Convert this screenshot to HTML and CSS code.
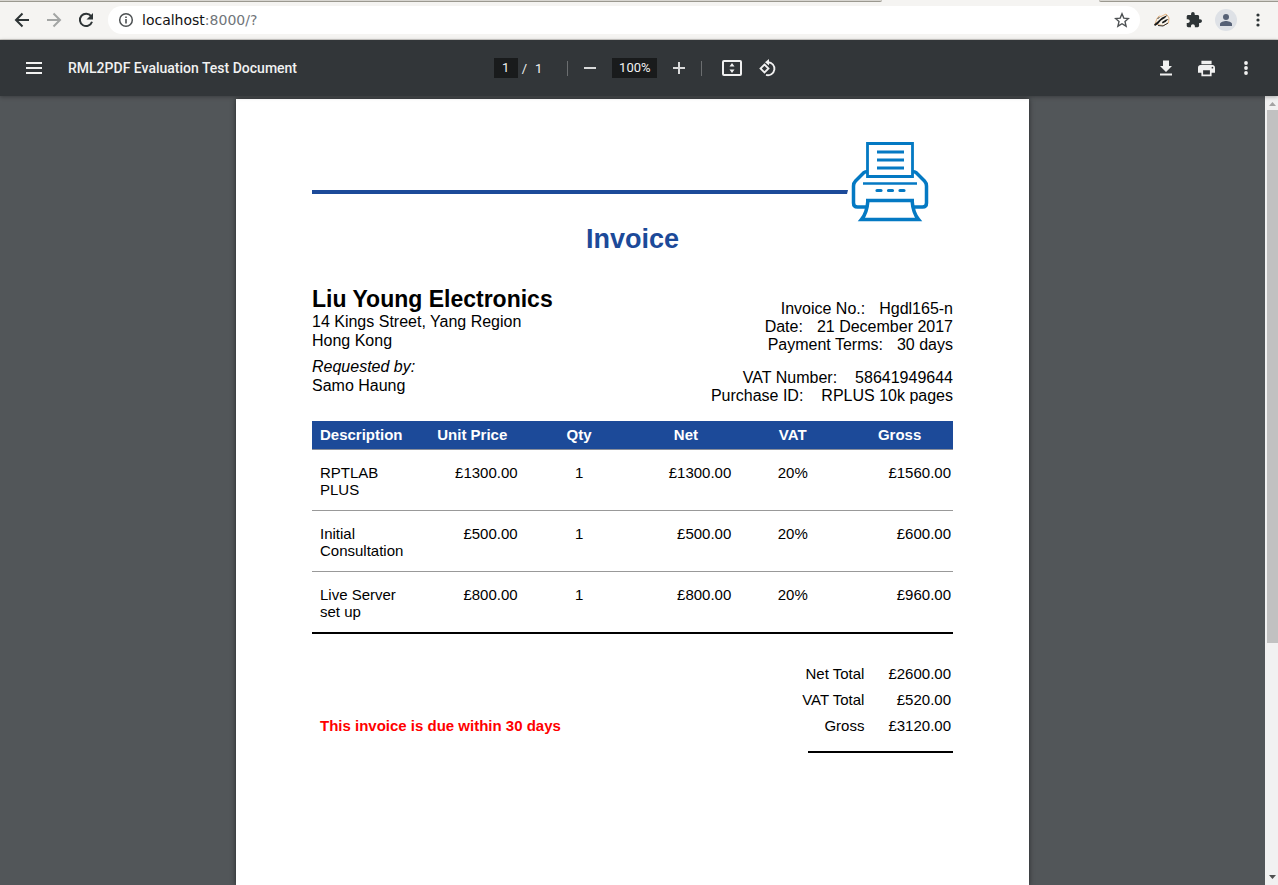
FILE: index.html
```html
<!DOCTYPE html>
<html lang="en">
<head>
<meta charset="utf-8">
<title>RML2PDF Evaluation Test Document</title>
<link rel="stylesheet" href="styles.css">
</head>
<body>
<div class="browser">
  <div class="tab-strip"><span class="tab-edge tab-edge-left"></span><span class="tab-edge tab-edge-right"></span></div>
  <nav class="browser-bar" aria-label="Browser">
    <button class="nav-button" aria-label="Back"><svg width="16" height="16" viewBox="0 0 16 16" fill="none" stroke="#2e3436" stroke-width="2"><path d="M15 8H2.500M8.500 1.500 2 8l6.500 6.500"/></svg></button>
    <button class="nav-button" aria-label="Forward"><svg width="16" height="16" viewBox="0 0 16 16" fill="none" stroke="#a3a5a4" stroke-width="2"><path d="M1 8h12.500M7.500 1.500 14 8l-6.500 6.500"/></svg></button>
    <button class="nav-button" aria-label="Reload"><svg width="16" height="16" viewBox="0 0 16 16"><path d="M13.100 4.200A6.200 6.200 0 1 0 14 9.800" fill="none" stroke="#2e3436" stroke-width="2"/><path d="M15 1v6.500H8.500z" fill="#2e3436"/></svg></button>
    <div class="address">
      <svg width="16" height="16" viewBox="0 0 16 16"><circle cx="8" cy="8" r="6.300" fill="none" stroke="#4d5153" stroke-width="1.500"/><path d="M7.200 7h1.600v4.500H7.200zM7.200 4.500h1.600v1.600H7.200z" fill="#4d5153"/></svg>
      <a class="url" href="#">localhost<span class="url-rest">:8000/?</span></a>
      <button class="star" aria-label="Bookmark"><svg width="16" height="16" viewBox="0 0 16 16"><path d="m8 1.800 1.800 4.300 4.700.4L11 9.600l1.100 4.600L8 11.700l-4.100 2.500L5 9.600 1.500 6.500l4.700-.4z" fill="none" stroke="#4d5153" stroke-width="1.400"/></svg></button>
    </div>
    <div class="extensions">
      <button class="ext-button" aria-label="Badger extension"><svg width="18" height="16" viewBox="0 0 18 16"><path d="M2 12 4 6.500 6 4l2 .5L13 2l1.500 1.500L16 6l-.5 5-5 2.500-6-1z" fill="#f8f5ee" stroke="#e0a265" stroke-width=".8"/><path d="M1 12.500 4 10l5-4.500L14.500 3 12 6 8 8.500 5 12l-3 2zM9 10l4-2.500L15.500 7l-3 3-3 1.500z" fill="#1a1a1a"/><path d="M4.500 7 6.500 5M5 13.500l5 .5 5-3" fill="none" stroke="#333" stroke-width="1"/></svg></button>
      <button class="ext-button" aria-label="Extensions"><svg width="16" height="16" viewBox="1 1 22 22"><path fill="#2e3436" d="M20.500 11H19V7c0-1.100-.9-2-2-2h-4V3.500a2.500 2.500 0 0 0-5 0V5H4c-1.100 0-2 .9-2 2v3.800h1.500c1.500 0 2.700 1.200 2.700 2.700S5 16.200 3.500 16.200H2V20c0 1.100.9 2 2 2h3.800v-1.500c0-1.500 1.200-2.700 2.700-2.700s2.700 1.200 2.700 2.700V22H17c1.100 0 2-.9 2-2v-4h1.500a2.500 2.500 0 0 0 0-5z"/></svg></button>
      <button class="ext-button" aria-label="Profile"><svg width="22" height="22" viewBox="0 0 22 22"><circle cx="11" cy="11" r="11" fill="#dee1e6"/><circle cx="11" cy="8" r="3" fill="#566176"/><path d="M5 17v-2c0-2 4-3 6-3s6 1 6 3v2z" fill="#566176"/></svg></button>
      <button class="ext-button" aria-label="Browser menu"><svg width="16" height="16" viewBox="0 0 16 16" fill="#2e3436"><circle cx="8" cy="3" r="1.600"/><circle cx="8" cy="8" r="1.600"/><circle cx="8" cy="13" r="1.600"/></svg></button>
    </div>
  </nav>
</div>

<header class="toolbar">
  <div class="toolbar-start">
    <button class="tool" aria-label="Menu"><svg width="16" height="12" viewBox="0 0 16 12" fill="#f1f1f1"><path d="M0 0h16v2H0zM0 5h16v2H0zM0 10h16v2H0z"/></svg></button>
    <span class="doc-title">RML2PDF Evaluation Test Document</span>
  </div>
  <div class="toolbar-center">
    <div class="pages"><input class="field page-field" type="text" value="1" aria-label="Page number"><span>/</span><span>1</span></div>
    <span class="divider"></span>
    <button class="tool" aria-label="Zoom out"><svg width="12" height="12" viewBox="0 0 12 12"><path d="M0 5h12v2H0z" fill="#d9dadb"/></svg></button>
    <input class="field zoom-field" type="text" value="100%" aria-label="Zoom">
    <button class="tool" aria-label="Zoom in"><svg width="12" height="12" viewBox="0 0 12 12"><path d="M0 5h12v2H0zM5 0h2v12H5z" fill="#d9dadb"/></svg></button>
    <span class="divider"></span>
    <div class="view-tools">
      <button class="tool" aria-label="Fit to page"><svg width="20" height="16" viewBox="0 0 20 16"><rect x="1" y="1" width="18" height="14" rx="1" fill="none" stroke="#f1f1f1" stroke-width="2"/><path d="m10 3 2.500 3.500h-5zM10 13l2.500-3.500h-5z" fill="#f1f1f1"/></svg></button>
      <button class="tool" aria-label="Rotate"><svg width="18" height="18" viewBox="0 0 18 18"><path d="M5.500 5.500 9.500 9.500 5.500 13.500 1.500 9.500z" fill="none" stroke="#f1f1f1" stroke-width="1.800"/><path d="M9 3.200a6.500 6.500 0 1 1-2 12.700" fill="none" stroke="#f1f1f1" stroke-width="1.900"/><path d="m6 3.200 4-3.200v6.400z" fill="#f1f1f1"/></svg></button>
    </div>
  </div>
  <div class="toolbar-end">
    <button class="tool" aria-label="Download"><svg width="24" height="24" viewBox="0 0 24 24" fill="#f1f1f1"><path d="M18 10h-3V4.500H9V10H6l6 6zM6 17.500h12v2H6z"/></svg></button>
    <button class="tool" aria-label="Print"><svg width="17" height="17" viewBox="2 2 20 20" fill="#f1f1f1"><path d="M19 8H5c-1.700 0-3 1.300-3 3v6h4v4h12v-4h4v-6c0-1.700-1.300-3-3-3zm-3 11H8v-5h8zm3-7a1 1 0 1 1 0-2 1 1 0 0 1 0 2zM18 3H6v4h12z"/></svg></button>
    <button class="tool" aria-label="More actions"><svg width="16" height="16" viewBox="0 0 16 16" fill="#f1f1f1"><circle cx="8" cy="3" r="1.900"/><circle cx="8" cy="8" r="1.900"/><circle cx="8" cy="13" r="1.900"/></svg></button>
  </div>
</header>

<div class="viewer">
  <main class="canvas">
    <article class="paper">
      <div class="masthead">
        <svg class="rule" height="4" viewBox="0 0 536 4" preserveAspectRatio="none"><path d="M0 0h536l-1 4H0z" fill="#1c4a99"/></svg>
        <svg class="logo" width="80" height="82" viewBox="0 0 80 82" fill="none" stroke="#0479c3">
          <path d="M18 31.500q-3 0-4 1L5.500 41Q3.500 43 3.500 46v17q0 4 4 4H17M62 31.500q3 0 4 1L74.500 41q2 2 2 5v17q0 4-4 4H63" stroke-width="3.500"/>
          <path d="M17.500 3.500h45v33h-45zM27 12h27M27 20h27M27 28h27" stroke-width="2.800"/>
          <path d="M13 43.500h54" stroke-width="2.500"/>
          <path d="M27 50.500h4M38.500 50.500h4M50 50.500h4" stroke-width="3.200" stroke-linecap="round"/>
          <path d="M16 60.500h48M18 60q-1 13-6.500 19.500h57Q63 73 62 60" stroke-width="3.500"/>
        </svg>
      </div>
      <h1 class="title">Invoice</h1>
      <section class="details">
        <div class="client">
          <h2 class="client-name">Liu Young Electronics</h2>
          <p class="line">14 Kings Street, Yang Region<br>Hong Kong</p>
          <p class="line"><em>Requested by:</em><br>Samo Haung</p>
        </div>
        <div class="reference">
          <dl class="facts facts-narrow">
            <div class="fact"><dt>Invoice No.:</dt><dd>Hgdl165-n</dd></div>
            <div class="fact"><dt>Date:</dt><dd>21 December 2017</dd></div>
            <div class="fact"><dt>Payment Terms:</dt><dd>30 days</dd></div>
          </dl>
          <dl class="facts facts-wide">
            <div class="fact"><dt>VAT Number:</dt><dd>58641949644</dd></div>
            <div class="fact"><dt>Purchase ID:</dt><dd>RPLUS 10k pages</dd></div>
          </dl>
        </div>
      </section>
      <table class="items">
        <thead><tr><th class="name">Description</th><th>Unit Price</th><th>Qty</th><th>Net</th><th>VAT</th><th>Gross</th></tr></thead>
        <tbody>
          <tr><td class="name">RPTLAB<br>PLUS</td><td class="money">£1300.00</td><td>1</td><td class="money">£1300.00</td><td>20%</td><td class="money last">£1560.00</td></tr>
          <tr><td class="name">Initial<br>Consultation</td><td class="money">£500.00</td><td>1</td><td class="money">£500.00</td><td>20%</td><td class="money last">£600.00</td></tr>
          <tr><td class="name">Live Server<br>set up</td><td class="money">£800.00</td><td>1</td><td class="money">£800.00</td><td>20%</td><td class="money last">£960.00</td></tr>
        </tbody>
      </table>
      <section class="summary">
        <p class="due">This invoice is due within 30 days</p>
        <div class="totals-block">
          <table class="totals">
            <tbody>
              <tr><th>Net Total</th><td>£2600.00</td></tr>
              <tr><th>VAT Total</th><td>£520.00</td></tr>
              <tr><th>Gross</th><td>£3120.00</td></tr>
            </tbody>
          </table>
          <hr class="totals-rule">
        </div>
      </section>
    </article>
  </main>
  <div class="scrollbar" aria-hidden="true">
    <svg width="13" height="14" viewBox="0 0 13 14"><path d="M7.500 6 11 10H4z" fill="#a3a3a3"/></svg>
    <div class="track"><div class="thumb"></div></div>
    <svg width="13" height="14" viewBox="0 0 13 14"><path d="M4 4h7L7.500 8z" fill="#505050"/></svg>
  </div>
</div>
</body>
</html>
```
FILE: styles.css
```css
* { box-sizing: border-box; }

body {
  margin: 0;
  height: 100vh;
  display: flex;
  flex-direction: column;
  overflow: hidden;
  background: #525659;
  color: #000;
  font-family: "Liberation Sans", Arial, sans-serif;
  font-size: 16px;
}

button {
  display: flex;
  align-items: center;
  justify-content: center;
  padding: 0;
  border: 0;
  background: none;
}

svg { display: block; flex: none; }

/* Browser chrome */
.browser {
  background: #f5f4f2;
  border-bottom: 1px solid #cfcdca;
}

.tab-strip {
  display: flex;
  justify-content: space-between;
  height: 2px;
}

.tab-edge {
  background: #d8d6d1;
  border-bottom: 1px solid #9b9990;
}

.tab-edge-left { width: 69%; border-bottom-right-radius: 2px; }
.tab-edge-right { width: 14%; border-bottom-left-radius: 2px; }

.browser-bar {
  display: flex;
  align-items: center;
  height: 37px;
  padding: 0 12px 2px 14px;
}

.nav-button { width: 16px; height: 28px; margin-right: 16px; }
.nav-button:nth-child(3) { margin-right: 14px; }

.address {
  flex: 1;
  display: flex;
  align-items: center;
  height: 28px;
  padding: 0 10px;
  border-radius: 14px;
  background: #fff;
}

.url {
  flex: 1;
  margin-left: 8px;
  color: #111;
  font: 14px "DejaVu Sans", sans-serif;
  text-decoration: none;
}

.url-rest { color: #70757a; }

.extensions {
  display: flex;
  align-items: center;
  gap: 10px;
  margin-left: 11px;
}

.ext-button { width: 22px; height: 22px; }
.ext-button:last-child { width: 16px; margin-left: 3px; }

/* PDF toolbar */
.toolbar {
  position: relative;
  z-index: 1;
  flex: none;
  display: flex;
  align-items: center;
  height: 56px;
  padding: 0 20px 0 22px;
  background: #323639;
  color: #f1f1f1;
  font: 14px Roboto, sans-serif;
  box-shadow: 0 1px 4px rgba(0, 0, 0, .3);
}

.toolbar-start,
.toolbar-end {
  flex: 1;
  display: flex;
  align-items: center;
}

.toolbar-start { gap: 22px; }
.toolbar-end { justify-content: flex-end; gap: 16px; }
.tool { width: 24px; height: 24px; }
.doc-title { font-weight: 500; white-space: nowrap; }

.toolbar-center {
  display: flex;
  align-items: center;
  gap: 10px;
  margin-right: 6px;
  font-size: 13px;
}

.pages { display: flex; align-items: center; gap: 8px; margin-right: 15px; }
.pages span:first-of-type { margin-left: -4px; }

.field {
  height: 20px;
  padding: 0 0 1px;
  border: 0;
  background: #191b1c;
  color: #f1f1f1;
  font: 13px Roboto, sans-serif;
  text-align: center;
}

.page-field { width: 24px; }
.zoom-field { width: 45px; }
.divider { width: 1px; height: 15px; background: #6b6e70; }
.view-tools { display: flex; gap: 12px; margin-left: 8px; }

/* Document area */
.viewer { flex: 1; display: flex; min-height: 0; }

.canvas {
  flex: 1;
  display: flex;
  justify-content: center;
  overflow: hidden;
  padding: 3px 20px 0;
}

.paper {
  width: 793px;
  max-width: 100%;
  min-height: 100%;
  padding: 41px 76px 0;
  background: #fff;
  box-shadow: 0 0 5px rgba(0, 0, 0, .55);
}

.masthead { display: flex; gap: 2px; margin-right: 23px; }
.rule { flex: 1 1 0; min-width: 0; margin-top: 50px; }

.title {
  margin: 1px 0 0;
  color: #1c4a99;
  font-size: 27px;
  line-height: 32px;
  text-align: center;
}

.details {
  display: flex;
  justify-content: space-between;
  margin-top: 31px;
}

.client-name { margin: 0; font-size: 23px; line-height: 26px; }
.line { margin: 0 0 7px; line-height: 19px; }
.reference { padding-top: 14px; line-height: 18px; }
.facts { margin: 0 0 15px; }
.fact { display: flex; justify-content: flex-end; }
.facts-narrow .fact { gap: 14px; }
.facts-wide .fact { gap: 18px; }
.facts dd { margin: 0; }

.items {
  width: 100%;
  margin-top: 1px;
  border-collapse: separate;
  border-spacing: 0;
  table-layout: fixed;
  font-size: 15px;
  line-height: 17px;
}

.items th {
  height: 29px;
  padding: 0 0 1px;
  border-bottom: 1px solid #8a8f9b;
  background: #1c4a99;
  color: #fff;
}

.items td {
  padding: 14px 0 12px;
  border-bottom: 1px solid #999;
  text-align: center;
  vertical-align: top;
}

.items .name { padding-left: 8px; text-align: left; }
.items .money { padding-right: 8px; text-align: right; }
.items .last { padding-right: 2px; }
.items tr:last-child td { border-bottom: 2px solid #000; }

.summary {
  display: flex;
  align-items: flex-end;
  justify-content: space-between;
  margin-top: 27px;
  padding-left: 8px;
  font-size: 15px;
  line-height: 26px;
}

.due { margin: 0 0 14px; color: #f00; font-weight: bold; }
.totals { margin-left: auto; border-spacing: 0; text-align: right; }
.totals th { padding: 0; font-weight: normal; text-align: right; }
.totals td { padding: 0 2px 0 24px; }

.totals-rule {
  width: 145px;
  margin: 12px 0 0 auto;
  border: 0;
  border-top: 2px solid #000;
}

/* Scrollbar */
.scrollbar {
  display: flex;
  flex-direction: column;
  width: 13px;
  background: #f1f1f1;
}

.track { flex: 1; padding-left: 2px; }
.thumb { height: 70%; background: #c1c1c1; }
```
